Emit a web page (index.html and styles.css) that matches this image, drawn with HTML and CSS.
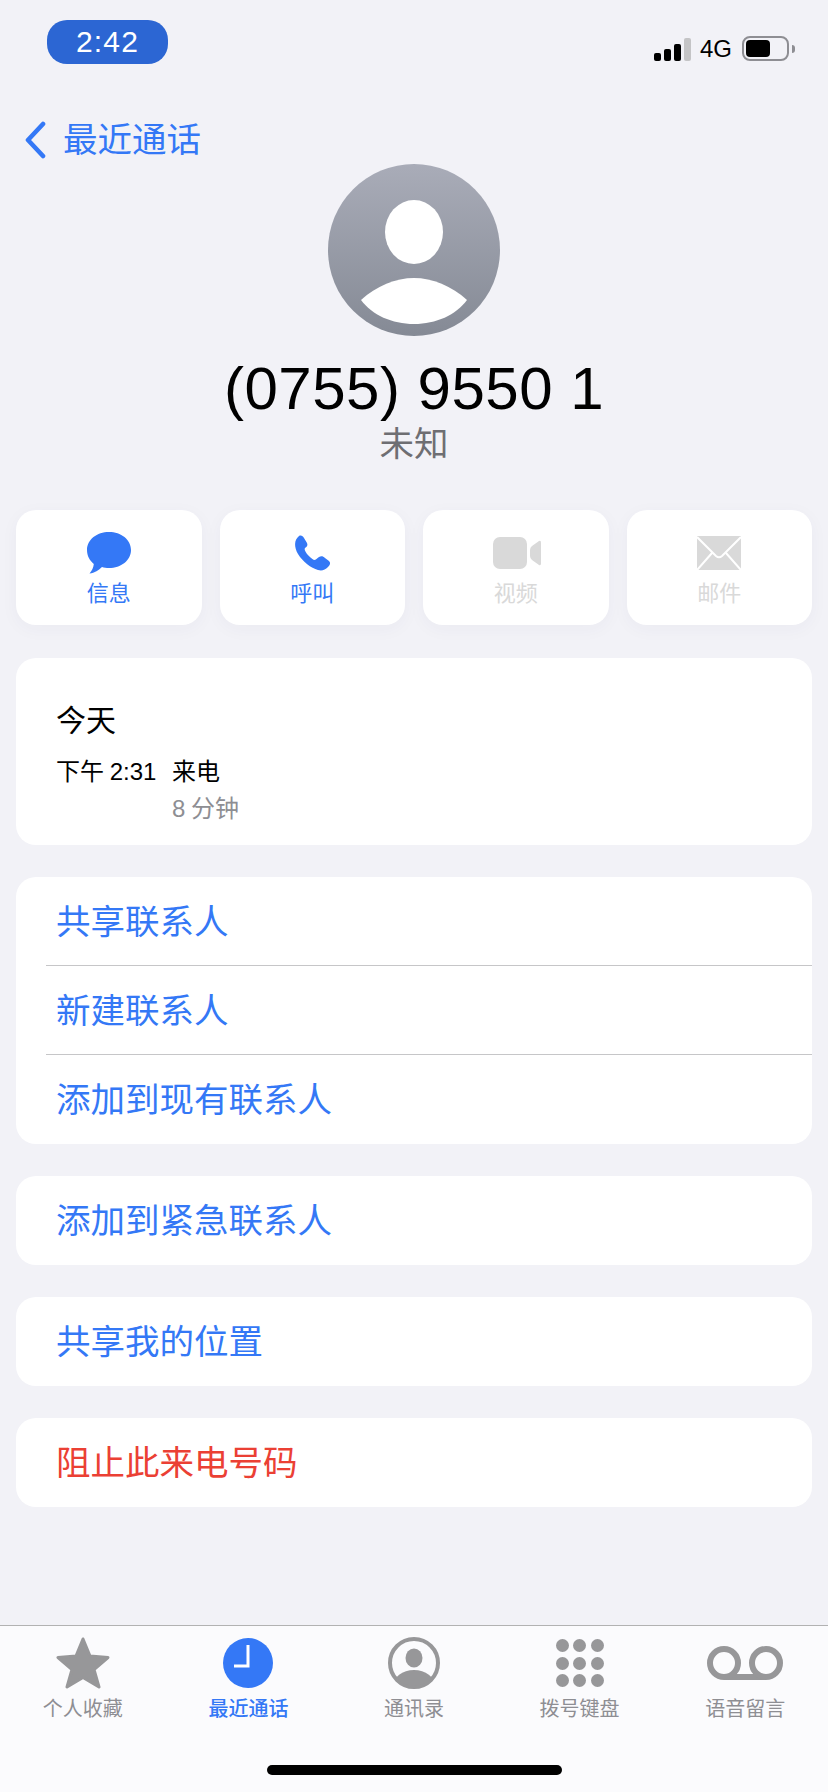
FILE: index.html
```html
<!DOCTYPE html>
<html lang="zh">
<head>
<meta charset="utf-8">
<title>最近通话</title>
<link rel="stylesheet" href="styles.css">
</head>
<body>
<div class="page">
  <header class="status">
    <div class="pill">2:42</div>
    <div class="status-right">
      <div class="signal"><i class="b1"></i><i class="b2"></i><i class="b3"></i><i class="b4"></i></div>
      <span class="net">4G</span>
      <div class="battery"><div class="battery-fill"></div></div>
      <div class="knob"></div>
    </div>
  </header>
  <main class="main">
    <nav class="nav">
      <svg class="chev" width="22" height="38" viewBox="0 0 22 38"><path d="M19 3 L4 19 L19 35" fill="none" stroke="#3478f6" stroke-width="4.6" stroke-linecap="round" stroke-linejoin="round"/></svg>
      <span class="back">最近通话</span>
    </nav>
    <section class="hero">
      <svg class="avatar" width="172" height="172" viewBox="0 0 172 172">
        <defs><linearGradient id="ag" x1="0" y1="0" x2="0" y2="1"><stop offset="0" stop-color="#a9acb8"/><stop offset="1" stop-color="#858a95"/></linearGradient></defs>
        <circle cx="86" cy="86" r="86" fill="url(#ag)"/>
        <ellipse cx="86" cy="68" rx="29" ry="32" fill="#fff"/>
        <path d="M33 136 C48 122 68 114 86 114 C104 114 124 122 139 136 C128 151 108 160 86 160 C64 160 44 151 33 136 Z" fill="#fff"/>
      </svg>
      <h1 class="number">(0755) 9550 1</h1>
      <div class="unknown">未知</div>
    </section>
    <section class="actions">
      <div class="action">
        <svg class="a-icon" width="46" height="42" viewBox="0 0 46 42"><path d="M23 0 C35 0 45 7.500 45 18 C45 28.500 35 36 23 36 C20.500 36 18 35.700 16 35 C13 38 8.500 41 3.500 41.500 C6 38.500 7.500 35.500 7.800 32 C3.500 28.500 1 23.500 1 18 C1 7.500 11 0 23 0 Z" fill="#3478f6"/></svg>
        <span class="a-label">信息</span>
      </div>
      <div class="action">
        <svg class="a-icon" width="37" height="36" viewBox="0 0 37 36"><path d="M5 1 C7 0 9 1 10 3 L13 8 C14 10 13 12 11 13 C10 14 11 16 13 19 C15 21 18 24 20 25 C22 25 23 23 25 22 C27 21 29 21 31 23 L35 26 C37 28 36 30 34 32 C31 35 28 36 24 35 C17 33 9 27 4 19 C0 12 0 5 5 1 Z" fill="#3478f6"/></svg>
        <span class="a-label">呼叫</span>
      </div>
      <div class="action off">
        <svg class="a-icon video" width="48" height="34" viewBox="0 0 48 34"><rect x="0" y="1" width="34" height="32" rx="7" fill="#d9d9d9"/><path d="M37 14 Q37 11.500 39 10 L46 5 Q48 4 48 6.500 L48 27.500 Q48 30 46 29 L39 24 Q37 22.500 37 20 Z" fill="#d9d9d9"/></svg>
        <span class="a-label">视频</span>
      </div>
      <div class="action off">
        <svg class="a-icon" width="44" height="34" viewBox="0 0 44 34"><rect width="44" height="34" fill="#d9d9d9"/><path d="M0 1 L19 20 Q22 22.500 25 20 L44 1 M0 34 L15 17 M44 34 L29 17" fill="none" stroke="#fff" stroke-width="2"/></svg>
        <span class="a-label">邮件</span>
      </div>
    </section>
    <section class="card info">
      <div class="day">今天</div>
      <div class="call"><span class="time">下午 2:31</span><span class="kind">来电</span></div>
      <div class="call"><span class="time"></span><span class="dur">8 分钟</span></div>
    </section>
    <section class="card group">
      <div class="row link">共享联系人</div>
      <div class="row link">新建联系人</div>
      <div class="row link">添加到现有联系人</div>
    </section>
    <section class="card group"><div class="row link">添加到紧急联系人</div></section>
    <section class="card group"><div class="row link">共享我的位置</div></section>
    <section class="card group"><div class="row danger">阻止此来电号码</div></section>
  </main>
  <footer class="tabbar">
    <div class="tabs">
      <div class="tab">
        <div class="t-icon"><svg width="56" height="52" viewBox="0 0 56 52"><path d="M28 2 L35 19 L53 20.500 L39 32.500 L44 50 L28 40.500 L12 50 L17 32.500 L3 20.500 L21 19 Z" fill="#979799" stroke="#979799" stroke-width="3" stroke-linejoin="round"/></svg></div>
        <span class="t-label">个人收藏</span>
      </div>
      <div class="tab active">
        <div class="t-icon"><svg width="50" height="50" viewBox="0 0 50 50"><circle cx="25" cy="25" r="25" fill="#3478f6"/><path d="M25 7 V28 H11" fill="none" stroke="#fff" stroke-width="3"/></svg></div>
        <span class="t-label">最近通话</span>
      </div>
      <div class="tab">
        <div class="t-icon"><svg width="52" height="52" viewBox="0 0 52 52"><defs><clipPath id="cc"><circle cx="26" cy="26" r="23"/></clipPath></defs><circle cx="26" cy="26" r="24" fill="none" stroke="#979799" stroke-width="4"/><ellipse cx="26" cy="21" rx="8.500" ry="9.500" fill="#979799"/><ellipse cx="26" cy="49" rx="21" ry="16" fill="#979799" clip-path="url(#cc)"/></svg></div>
        <span class="t-label">通讯录</span>
      </div>
      <div class="tab">
        <div class="t-icon"><div class="keypad"><i></i><i></i><i></i><i></i><i></i><i></i><i></i><i></i><i></i></div></div>
        <span class="t-label">拨号键盘</span>
      </div>
      <div class="tab">
        <div class="t-icon"><svg width="76" height="34" viewBox="0 0 76 34"><path d="M17 31 H59" stroke="#979799" stroke-width="6" fill="none"/><circle cx="17" cy="17" r="14" fill="none" stroke="#979799" stroke-width="6"/><circle cx="59" cy="17" r="14" fill="none" stroke="#979799" stroke-width="6"/></svg></div>
        <span class="t-label">语音留言</span>
      </div>
    </div>
    <div class="home"></div>
  </footer>
</div>
</body>
</html>
```
FILE: styles.css
```css
* { box-sizing: border-box; }
html, body { margin: 0; padding: 0; }
body {
  background: #f2f2f7;
  font-family: "Liberation Sans", "Noto Sans CJK SC", sans-serif;
  color: #000;
}
.page { width: 828px; height: 1792px; display: flex; flex-direction: column; overflow: hidden; }

.status { height: 98px; padding: 20px 33px 0 47px; display: flex; justify-content: space-between; align-items: flex-start; flex: none; }
.pill { width: 121px; height: 44px; border-radius: 20px; background: #2c66d3; color: #fff; font-size: 30px; line-height: 44px; text-align: center; letter-spacing: 1.2px; }
.status-right { display: flex; align-items: flex-end; margin-top: 16px; height: 25px; }
.signal { display: flex; align-items: flex-end; gap: 3.500px; height: 24px; }
.signal i { display: block; width: 6.500px; border-radius: 2px; background: #000; }
.signal .b1 { height: 8px; }
.signal .b2 { height: 12px; }
.signal .b3 { height: 17px; }
.signal .b4 { height: 23px; background: #c4c4c6; }
.net { font-size: 24px; line-height: 25px; margin-left: 9px; margin-right: 10px; }
.battery { width: 47px; height: 25px; border: 2px solid #8e8e93; border-radius: 8px; padding: 2px; }
.battery-fill { width: 24px; height: 17px; background: #000; border-radius: 4px; }
.knob { width: 3px; height: 8px; background: #8e8e93; border-radius: 0 3px 3px 0; margin: 0 0 8px 3px; }

.main { flex: 1; padding: 0 16px; display: flex; flex-direction: column; }
.nav { height: 66px; padding: 18px 0 0 8px; display: flex; align-items: center; flex: none; }
.chev { flex: none; }
.back { font-size: 34.500px; line-height: 44px; color: #3478f6; margin-left: 17px; }

.hero { display: flex; flex-direction: column; align-items: center; flex: none; }
.avatar { display: block; }
.number { font-size: 60px; line-height: 64px; font-weight: 400; letter-spacing: 0.5px; margin: 21px 0 0; }
.unknown { font-size: 34.500px; line-height: 44px; color: #6e6e72; margin-top: 1px; }

.actions { display: grid; grid-template-columns: repeat(4, 1fr); gap: 18px; margin-top: 44px; flex: none; }
.action { height: 115px; background: #fff; border-radius: 20px; box-shadow: 0 4px 18px rgba(60, 60, 90, 0.04); display: flex; flex-direction: column; align-items: center; padding-top: 22px; }
.a-icon { display: block; height: 42px; }
.video { margin-left: 3px; }
.a-label { font-size: 22px; line-height: 30px; color: #3478f6; margin-top: 5px; }
.off .a-label { color: #d9d9d9; }

.card { background: #fff; border-radius: 20px; flex: none; }
.info { height: 187px; margin-top: 33px; padding: 41px 40px 0; }
.day { font-size: 30px; line-height: 44px; }
.call { display: flex; font-size: 24px; line-height: 36px; word-spacing: -1px; }
.call + .call { margin-top: 1px; }
.day + .call { margin-top: 11px; }
.time { width: 116px; flex: none; }
.dur { color: #8e8e93; }

.group { margin-top: 32px; padding-left: 30px; }
.row { height: 89px; display: flex; align-items: center; font-size: 34.500px; padding: 0 0 5px 10px; }
.row:not(:last-child) { border-bottom: 1px solid #c6c6c8; }
.link { color: #3478f6; }
.danger { color: #eb4034; }

.tabbar { height: 167px; flex: none; background: #fbfbfd; border-top: 1px solid #b2b2b2; display: flex; flex-direction: column; align-items: center; }
.tabs { display: grid; grid-template-columns: repeat(5, 1fr); width: 100%; padding-top: 9px; }
.tab { display: flex; flex-direction: column; align-items: center; }
.t-icon { height: 56px; display: flex; align-items: center; justify-content: center; }
.t-label { font-size: 20px; line-height: 28px; color: #8e8e93; margin-top: 4px; }
.active .t-label { color: #3478f6; font-weight: 500; }
.keypad { display: grid; grid-template-columns: repeat(3, 13px); gap: 4.500px; }
.keypad i { display: block; width: 13px; height: 13px; border-radius: 50%; background: #979799; }
.home { width: 295px; height: 10px; border-radius: 5px; background: #000; margin-top: 42px; }
```
